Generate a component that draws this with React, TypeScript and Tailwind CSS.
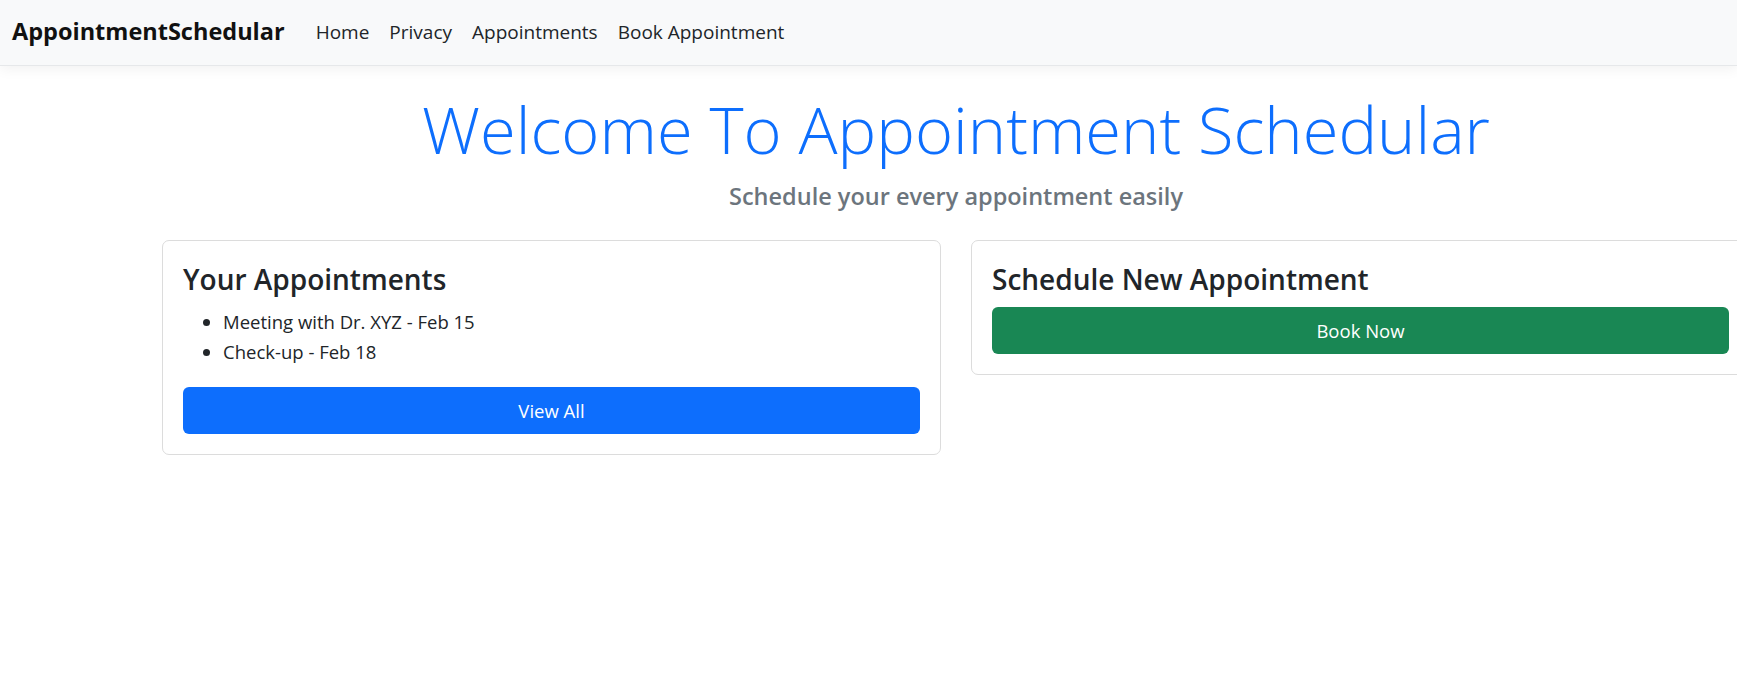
const font = { fontFamily: '"Open Sans", "Noto Sans", sans-serif' };

const navLinks = ["Home", "Privacy", "Appointments", "Book Appointment"];

function NavBar() {
    return (
        <nav className="h-[66px] bg-[#f8f9fa] border-b border-[#e6e8ea] shadow-[0_4px_12px_rgba(0,0,0,0.05)] flex items-center pl-[12px]">
            <a className="text-[23.5px] font-bold text-[#111] mr-[21px] leading-none -mt-[2px]">AppointmentSchedular</a>
            <ul className="flex items-center -mt-[2px]">
                {navLinks.map((link) => (
                    <li key={link}>
                        <a className="block px-[10px] text-[19px] text-[#212529] leading-[30px]">{link}</a>
                    </li>
                ))}
            </ul>
        </nav>
    );
}

function Card({ title, children }: { title: string; children: React.ReactNode }) {
    return (
        <div className="self-start border border-[#dcdcdc] rounded-[7px] bg-white p-[20px]">
            <h4 className="text-[28px] font-semibold text-[#212529] leading-[36px] mb-[10px]">{title}</h4>
            {children}
        </div>
    );
}

export default function App() {
    return (
        <div className="w-full min-h-[686px] bg-white overflow-hidden text-[#212529]" style={font}>
            <NavBar />
            <main className="w-[1588px] ml-[162px] pt-[21px]">
                <div className="text-center">
                    <h1 className="text-[65px] font-light text-[#0d6efd] leading-[84px] mb-[10px]">Welcome To Appointment Schedular</h1>
                    <h5 className="text-[23.5px] font-semibold text-[#6c757d] leading-[30px]">Schedule your every appointment easily</h5>
                </div>
                <div className="grid grid-cols-2 gap-[30px] mt-[29px] items-start">
                    <Card title="Your Appointments">
                        <ul className="list-disc pl-[40px] mb-[20px] text-[18.5px] leading-[30px]">
                            <li>Meeting with Dr. XYZ - Feb 15</li>
                            <li>Check-up - Feb 18</li>
                        </ul>
                        <button className="w-full h-[47px] rounded-[6px] bg-[#0d6efd] text-white text-[18.5px]">View All</button>
                    </Card>
                    <Card title="Schedule New Appointment">
                        <button className="w-full h-[47px] rounded-[6px] bg-[#198754] text-white text-[18.5px]">Book Now</button>
                    </Card>
                </div>
            </main>
        </div>
    );
}
